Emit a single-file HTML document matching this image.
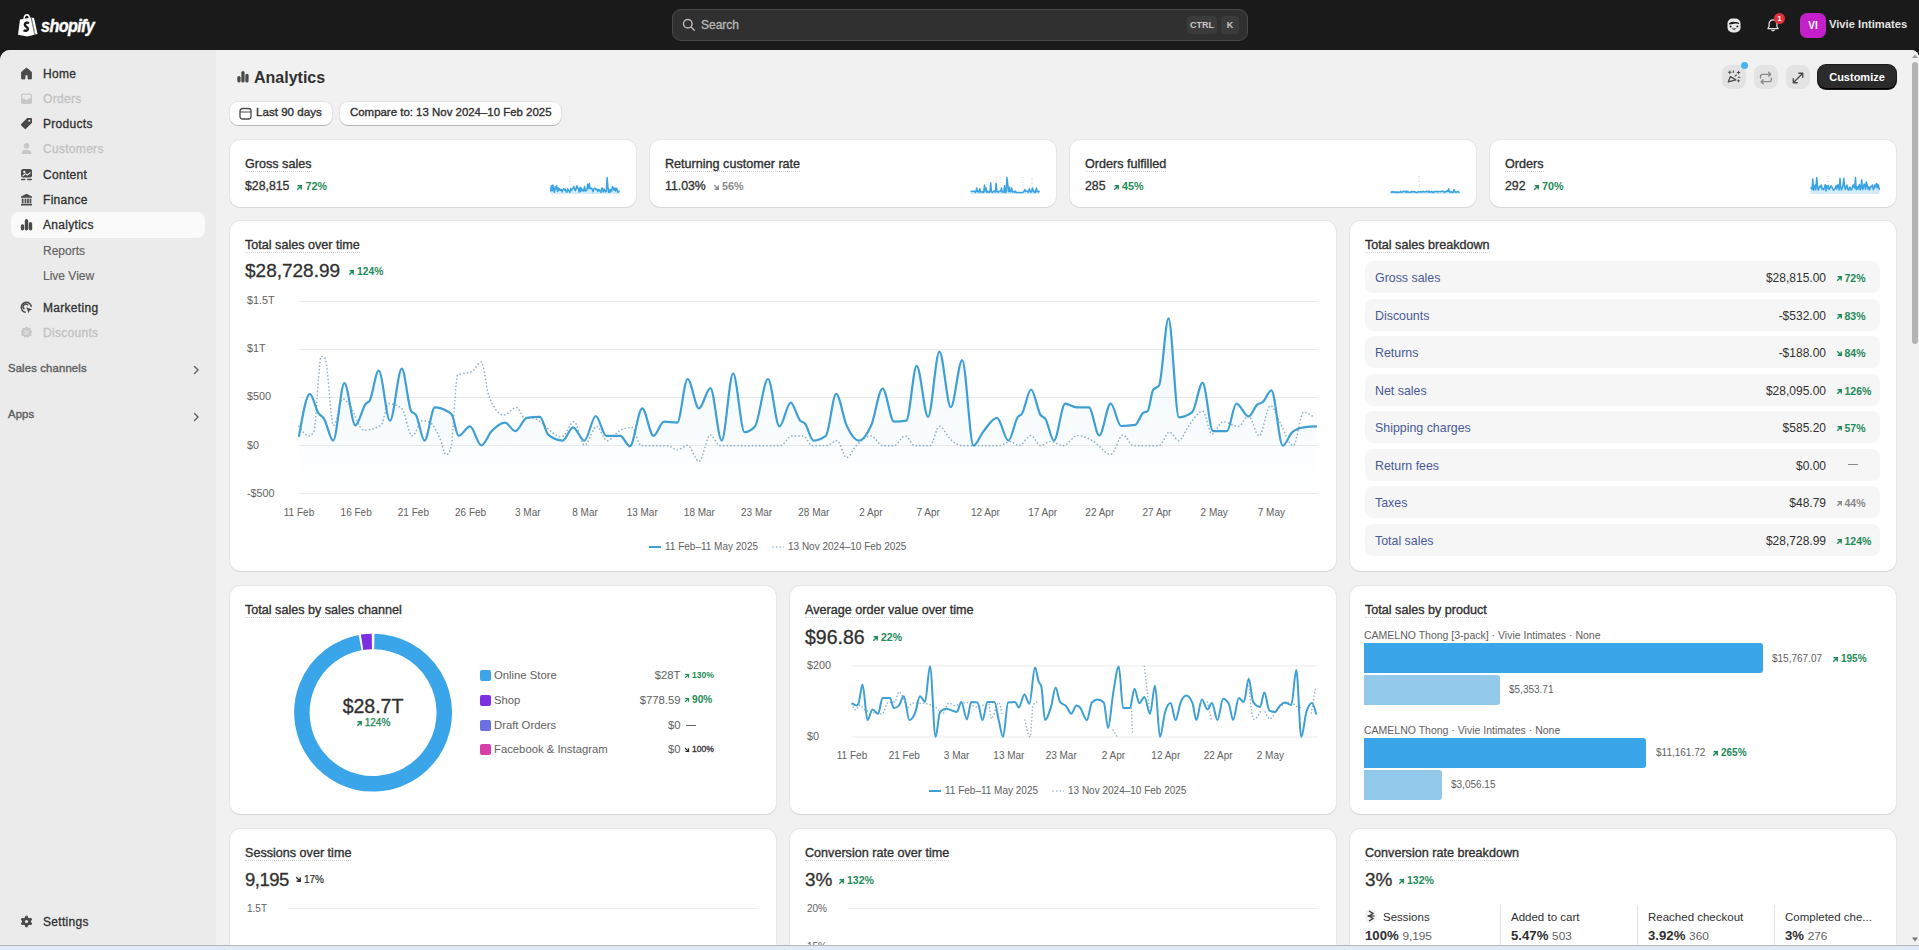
<!DOCTYPE html>
<html><head><meta charset="utf-8">
<style>
*{box-sizing:border-box;margin:0;padding:0}
html,body{width:1919px;height:950px;overflow:hidden;background:#1a1a1a;font-family:"Liberation Sans",sans-serif;color:#303030}
.abs{position:absolute}
.sb{-webkit-text-stroke:0.35px currentColor}
#top{position:absolute;left:0;top:0;width:1919px;height:50px;background:#1a1a1a}
#frame{position:absolute;left:0;top:50px;width:1919px;height:895px;background:#f1f1f1;border-radius:10px 8px 0 0;overflow:hidden}
#side{position:absolute;left:0;top:0;width:216px;height:895px;background:#ebebeb}
.nav{position:absolute;left:0;height:25px;width:216px;font-size:12px;line-height:25px}
.nav .ic{position:absolute;left:20px;top:6px;width:13px;height:13px}
.nav .tx{position:absolute;left:43px;top:1px;font-weight:400;color:#303030;font-size:12px;letter-spacing:0.3px;-webkit-text-stroke:0.3px currentColor}
.nav.dis .tx{color:#c2c2c2}
.nav.sub .tx{font-weight:400;color:#616161;font-size:12px;top:1.5px;letter-spacing:0;-webkit-text-stroke:0.15px currentColor}
.sec{position:absolute;left:8px;font-size:11.3px;font-weight:400;letter-spacing:0.15px;-webkit-text-stroke:0.4px #616161;color:#616161}
#taskbar{position:absolute;left:0;top:945px;width:1919px;height:5px;background:#dfeaf5;border-top:1px solid #b0b9c2}
.card{position:absolute;background:#fff;border-radius:10px;box-shadow:0 1px 0 rgba(26,26,26,.07),0 0 0 1px rgba(0,0,0,.045)}
.ttl{position:absolute;font-size:12.6px;font-weight:400;color:#303030;border-bottom:1px dotted #d4d4d4;line-height:14px;padding-bottom:0;white-space:nowrap}
.big{position:absolute;font-size:19px;color:#303030;white-space:nowrap;line-height:22px}
.up{color:#1f8a5a;font-weight:700;font-size:10.5px;white-space:nowrap}
.up svg,.dn svg,.gr svg{display:inline-block;vertical-align:middle}
.axis{position:absolute;font-size:10px;color:#616161;white-space:nowrap}
.brow{position:absolute;left:15px;width:515px;height:32px;background:#f6f6f6;border-radius:8px}
.brow .l{position:absolute;left:10px;top:1px;line-height:32px;font-size:12.4px;color:#4a5a98}
.brow .v{position:absolute;right:54px;top:1px;line-height:32px;font-size:12px;color:#303030;text-align:right}
.brow .p{position:absolute;left:470.5px;top:1px;line-height:32px;font-size:10.5px;font-weight:700;color:#1f8a5a}
.btnicon{position:absolute;width:24px;height:24px;border-radius:8px;background:#e3e3e3}
</style></head><body>

<!-- TOP BAR -->
<div id="top">
  <svg class="abs" style="left:17px;top:13px" width="22" height="24" viewBox="0 0 22 24">
    <path d="M3 6.5 L14.5 4.5 L18.5 21.5 L10.5 23.5 L1 21.8 Z" fill="#fff"/>
    <path d="M14.5 4.5 L17 5 L20.5 21 L18.5 21.5 Z" fill="#fff"/>
    <path d="M7 6 C7.3 3 8.6 1.8 10 1.8 C11.4 1.8 12.3 3 12.5 5.2" stroke="#fff" stroke-width="1.5" fill="none"/>
    <path d="M12 10.2 C10.5 9.2 8 9.6 7.8 11.6 C7.6 13.6 11.2 13.8 11 16 C10.8 18 8.3 18.2 6.6 17.2" stroke="#1a1a1a" stroke-width="2.4" fill="none"/>
    <line x1="14.2" y1="5" x2="17.8" y2="22" stroke="#1a1a1a" stroke-width="0.6"/>
  </svg>
  <div class="abs" style="left:40.5px;top:14.5px;font-size:18px;font-weight:700;font-style:italic;color:#fff;letter-spacing:-0.7px;transform:scaleX(0.9);transform-origin:left top;line-height:22px;-webkit-text-stroke:0.4px #fff">shopify</div>

  <div class="abs" style="left:672px;top:9px;width:576px;height:32px;background:#303030;border:1px solid #4a4a4a;border-radius:9px"></div>
  <svg class="abs" style="left:682px;top:18px" width="14" height="14" viewBox="0 0 14 14"><circle cx="5.8" cy="5.8" r="4.3" stroke="#b5b5b5" stroke-width="1.5" fill="none"/><line x1="9" y1="9" x2="12.3" y2="12.3" stroke="#b5b5b5" stroke-width="1.5" stroke-linecap="round"/></svg>
  <div class="abs sb" style="left:701px;top:18px;font-size:12px;line-height:15px;color:#b5b5b5">Search</div>
  <div class="abs" style="left:1187px;top:16px;width:30px;height:18px;background:#3b3b3b;border-radius:4px;font-size:9px;font-weight:700;color:#c8c8c8;text-align:center;line-height:18px">CTRL</div>
  <div class="abs" style="left:1221px;top:16px;width:18px;height:18px;background:#3b3b3b;border-radius:4px;font-size:9px;font-weight:700;color:#c8c8c8;text-align:center;line-height:18px">K</div>

  <!-- store icon -->
  <svg class="abs" style="left:1727px;top:17.5px" width="14" height="15" viewBox="0 0 14 15"><rect x="0.5" y="0.5" width="13" height="14" rx="5" fill="#e8e8e8"/><path d="M2 5.5 Q4 3.2 7.5 4 Q10.5 3.6 12 5 L12 6 Q9 5 7 5.8 Q4 6.5 2 6.5 Z" fill="#1a1a1a"/><circle cx="3.6" cy="8.4" r="1" fill="#1a1a1a"/><circle cx="10.4" cy="8.4" r="1" fill="#1a1a1a"/><path d="M4.5 10.5 Q7 12.8 9.5 10.5 Z" fill="#1a1a1a"/></svg>
  <!-- bell -->
  <svg class="abs" style="left:1766px;top:18px" width="14" height="15" viewBox="0 0 15 16"><path d="M7.5 2 C4.8 2 3.3 4 3.3 6.5 V9 L2 11.3 H13 L11.7 9 V6.5 C11.7 4 10.2 2 7.5 2 Z" stroke="#e3e3e3" stroke-width="1.3" fill="none" stroke-linejoin="round"/><path d="M5.8 12.5 Q7.5 15 9.2 12.5" stroke="#e3e3e3" stroke-width="1.3" fill="none"/></svg>
  <div class="abs" style="left:1774px;top:13px;width:11px;height:11px;border-radius:50%;background:#e0313c;color:#fff;font-size:8px;font-weight:700;text-align:center;line-height:11px">1</div>
  <div class="abs" style="left:1800px;top:13px;width:26px;height:25px;border-radius:7px;background:#c51fcc;color:#fff;font-size:10px;font-weight:700;text-align:center;line-height:25px">VI</div>
  <div class="abs" style="left:1829px;top:17px;font-size:11.2px;font-weight:700;color:#e3e3e3;line-height:15px;white-space:nowrap">Vivie Intimates</div>
</div>

<div id="frame">
  <!-- SIDEBAR -->
  <div id="side">
    <div class="nav " style="top:11px"><svg class="ic" viewBox="0 0 13 13"><path d="M6.5 1 L11.5 5 V11.5 Q11.5 12 11 12 H8 V9 Q8 7.8 6.5 7.8 Q5 7.8 5 9 V12 H2 Q1.5 12 1.5 11.5 V5 Z" fill="#4a4a4a" stroke="#4a4a4a" stroke-width="0.8" stroke-linejoin="round"/></svg><div class="tx">Home</div></div>
<div class="nav dis" style="top:36px"><svg class="ic" viewBox="0 0 13 13"><rect x="1" y="1.5" width="11" height="10.5" rx="2.5" fill="#c7c7c7"/><path d="M2.3 6.5 H4.5 L5.5 7.8 H7.5 L8.5 6.5 H10.7 V3.5 Q10.7 2.8 10 2.8 H3 Q2.3 2.8 2.3 3.5 Z" fill="#ebebeb"/></svg><div class="tx">Orders</div></div>
<div class="nav " style="top:61px"><svg class="ic" viewBox="0 0 13 13"><path d="M7.2 1 H11 Q12 1 12 2 V5.8 L6 11.8 Q5.3 12.5 4.6 11.8 L1.2 8.4 Q0.5 7.7 1.2 7 Z" fill="#4a4a4a"/><circle cx="9.3" cy="3.7" r="1" fill="#ebebeb"/></svg><div class="tx">Products</div></div>
<div class="nav dis" style="top:86px"><svg class="ic" viewBox="0 0 13 13"><circle cx="6.5" cy="3.8" r="2.8" fill="#c7c7c7"/><path d="M1.5 12 Q1.5 7.8 6.5 7.8 Q11.5 7.8 11.5 12 Z" fill="#c7c7c7"/></svg><div class="tx">Customers</div></div>
<div class="nav " style="top:112px"><svg class="ic" viewBox="0 0 13 13"><rect x="1" y="1" width="11" height="8.5" rx="2" fill="#4a4a4a"/><circle cx="4.3" cy="4" r="1.2" fill="#ebebeb"/><path d="M2.5 8 L5.5 5.8 L7.5 7 L10.5 4.5" stroke="#ebebeb" stroke-width="1.1" fill="none"/><rect x="1" y="10.8" width="4.5" height="1.5" rx="0.7" fill="#4a4a4a"/><rect x="7" y="10.8" width="5" height="1.5" rx="0.7" fill="#4a4a4a"/></svg><div class="tx">Content</div></div>
<div class="nav " style="top:137px"><svg class="ic" viewBox="0 0 13 13"><path d="M6.5 0.8 L12 3.6 V4.8 H1 V3.6 Z" fill="#4a4a4a"/><rect x="1.8" y="5.6" width="1.7" height="4.6" fill="#4a4a4a"/><rect x="4.6" y="5.6" width="1.7" height="4.6" fill="#4a4a4a"/><rect x="7.1" y="5.6" width="1.7" height="4.6" fill="#4a4a4a"/><rect x="9.6" y="5.6" width="1.7" height="4.6" fill="#4a4a4a"/><rect x="1" y="10.8" width="11" height="1.7" rx="0.5" fill="#4a4a4a"/></svg><div class="tx">Finance</div></div>
<div class="abs" style="left:11px;top:162px;width:194px;height:26px;background:#fafafa;border-radius:8px"></div>
<div class="nav sel" style="top:162px"><svg class="ic" viewBox="0 0 13 13"><rect x="0.8" y="6.3" width="3.4" height="6.2" rx="1.7" fill="#4a4a4a"/><rect x="4.8" y="1" width="3.4" height="11.5" rx="1.7" fill="#4a4a4a"/><rect x="8.8" y="4" width="3.4" height="8.5" rx="1.7" fill="#4a4a4a"/></svg><div class="tx">Analytics</div></div>
<div class="nav sub" style="top:187px"><div class="tx">Reports</div></div>
<div class="nav sub" style="top:212px"><div class="tx">Live View</div></div>
<div class="nav " style="top:245px"><svg class="ic" viewBox="0 0 13 13"><path d="M11.3 5.8 A5 5 0 1 0 5.8 11.3" stroke="#4a4a4a" stroke-width="1.6" fill="none"/><path d="M8 4.5 A2.6 2.6 0 1 0 4.5 8" stroke="#4a4a4a" stroke-width="1.5" fill="none"/><path d="M6.3 6.3 L12.3 8.6 L9.6 9.6 L8.6 12.3 Z" fill="#4a4a4a"/></svg><div class="tx">Marketing</div></div>
<div class="nav dis" style="top:270px"><svg class="ic" viewBox="0 0 13 13"><path d="M6.5 0.5 L8.2 1.9 L10.4 1.7 L10.7 3.9 L12.4 5.3 L11.3 7.2 L11.8 9.4 L9.6 9.9 L8.4 11.8 L6.5 10.8 L4.6 11.8 L3.4 9.9 L1.2 9.4 L1.7 7.2 L0.6 5.3 L2.3 3.9 L2.6 1.7 L4.8 1.9 Z" fill="#c7c7c7"/><path d="M4.6 8.4 L8.4 4.6" stroke="#ebebeb" stroke-width="1.1"/><circle cx="4.9" cy="4.9" r="0.8" fill="#ebebeb"/><circle cx="8.1" cy="8.1" r="0.8" fill="#ebebeb"/></svg><div class="tx">Discounts</div></div>
<div class="nav " style="top:859px"><svg class="ic" viewBox="0 0 13 13"><path d="M5.4 0.8 H7.6 L8 2.5 L9.4 3.3 L11.1 2.8 L12.2 4.7 L10.9 5.9 V7.1 L12.2 8.3 L11.1 10.2 L9.4 9.7 L8 10.5 L7.6 12.2 H5.4 L5 10.5 L3.6 9.7 L1.9 10.2 L0.8 8.3 L2.1 7.1 V5.9 L0.8 4.7 L1.9 2.8 L3.6 3.3 L5 2.5 Z" fill="#4a4a4a"/><circle cx="6.5" cy="6.5" r="1.6" fill="#ebebeb"/></svg><div class="tx">Settings</div></div>
<div class="sec" style="top:312px">Sales channels</div>
<svg class="abs" style="left:192px;top:315px" width="8" height="10" viewBox="0 0 8 10"><path d="M2.5 1.5 L6 5 L2.5 8.5" stroke="#616161" stroke-width="1.4" fill="none" stroke-linecap="round"/></svg>
<div class="sec" style="top:358px">Apps</div>
<svg class="abs" style="left:192px;top:362px" width="8" height="10" viewBox="0 0 8 10"><path d="M2.5 1.5 L6 5 L2.5 8.5" stroke="#616161" stroke-width="1.4" fill="none" stroke-linecap="round"/></svg>
  </div>

  <!-- MAIN HEADER -->
  <svg class="abs" style="left:237px;top:20px" width="12" height="13" viewBox="0 0 12 13"><rect x="0.3" y="6" width="3.3" height="6.5" rx="1.6" fill="#4a4a4a"/><rect x="4.3" y="1" width="3.3" height="11.5" rx="1.6" fill="#4a4a4a"/><rect x="8.3" y="3.8" width="3.3" height="8.7" rx="1.6" fill="#4a4a4a"/></svg>
  <div class="abs" style="left:254px;top:18px;font-size:16px;font-weight:700;color:#303030;line-height:20px;letter-spacing:0px">Analytics</div>

  <div class="abs" style="left:230px;top:52px;width:102px;height:23px;background:#fff;border-radius:8px;box-shadow:0 1px 0 rgba(0,0,0,.18),0 0 0 1px rgba(0,0,0,.06)"></div>
  <svg class="abs" style="left:239px;top:57px" width="13" height="13" viewBox="0 0 13 13"><rect x="1" y="1.5" width="11" height="10.5" rx="2.5" stroke="#4a4a4a" stroke-width="1.3" fill="none"/><line x1="1" y1="5" x2="12" y2="5" stroke="#4a4a4a" stroke-width="1.2"/></svg>
  <div class="abs sb" style="left:256px;top:54px;font-size:11.6px;line-height:15px;color:#303030">Last 90 days</div>
  <div class="abs" style="left:340px;top:52px;width:221px;height:23px;background:#fff;border-radius:8px;box-shadow:0 1px 0 rgba(0,0,0,.18),0 0 0 1px rgba(0,0,0,.06)"></div>
  <div class="abs sb" style="left:350px;top:54.5px;font-size:11.45px;line-height:15px;color:#303030;white-space:nowrap">Compare to: 13 Nov 2024&#8211;10 Feb 2025</div>

  <!-- right header buttons -->
  <div class="btnicon" style="left:1722px;top:15px"></div>
  <svg class="abs" style="left:1726px;top:20px" width="16" height="16" viewBox="1726 70 16 16"><path d="M1728.3 81.8 L1730.4 76.6 L1735.9 79.8 Z" stroke="#4a4a4a" stroke-width="1.3" fill="none" stroke-linejoin="round"/><path d="M1729.8 71 V73.4 M1728.6 72.2 H1731 M1733.3 70.8 V72.4 M1738.5 71.3 V73.7 M1737.3 72.5 H1739.7 M1735.2 76 L1736.4 74.8 M1738.2 77.2 H1739.9 M1738.5 79.8 V81.6 M1737.6 80.7 H1739.4" stroke="#4a4a4a" stroke-width="1.1" fill="none" stroke-linecap="round"/></svg>
  <div class="abs" style="left:1741px;top:12px;width:7px;height:7px;border-radius:50%;background:#4ab3f0"></div>
  <div class="btnicon" style="left:1754px;top:15px"></div>
  <svg class="abs" style="left:1758px;top:20px" width="16" height="16" viewBox="0 0 16 16"><path d="M2.5 8 V6.5 Q2.5 4.3 4.7 4.3 H12.5 M10.6 2.3 L12.7 4.3 L10.6 6.3 M13.3 8 V9.5 Q13.3 11.7 11.1 11.7 H3.3 M5.2 9.7 L3.1 11.7 L5.2 13.7" stroke="#8a8a8a" stroke-width="1.3" fill="none" stroke-linecap="round" stroke-linejoin="round"/></svg>
  <div class="btnicon" style="left:1786px;top:15px"></div>
  <svg class="abs" style="left:1790px;top:20px" width="16" height="16" viewBox="0 0 16 16"><path d="M3.5 12.5 L12.5 3.5 M8.8 3.3 H12.7 V7.2 M3.3 8.8 V12.7 H7.2" stroke="#4a4a4a" stroke-width="1.4" fill="none" stroke-linecap="round" stroke-linejoin="round"/></svg>
  <div class="abs" style="left:1818px;top:15px;width:78px;height:24px;background:#2b2b2b;border-radius:8px;box-shadow:inset 0 -1px 0 #000,0 0 0 1px #1a1a1a"></div>
  <div class="abs" style="left:1818px;top:15px;width:78px;height:25px;line-height:24px;text-align:center;font-size:11px;font-weight:700;color:#fff">Customize</div>

  <!-- scrollbar -->
  <div class="abs" style="left:1909px;top:0;width:10px;height:895px;background:#f1f1f1"></div>
  <div class="abs" style="left:1912px;top:12px;width:6px;height:282px;border-radius:3px;background:#b3b3b3"></div>
  <svg class="abs" style="left:1912px;top:4px" width="6" height="4" viewBox="0 0 6 4"><path d="M0 4 L3 0.5 L6 4 Z" fill="#a0a0a0"/></svg>
  <svg class="abs" style="left:1912px;top:887px" width="6" height="5" viewBox="0 0 6 5"><path d="M0 0.5 L6 0.5 L3 4.5 Z" fill="#777"/></svg>

  <div class="card" style="left:230px;top:90px;width:406px;height:67px"><div class="ttl sb" style="left:15px;top:16.5px">Gross sales</div><div class="abs" style="left:15px;top:39px;font-size:12.3px;line-height:15px;white-space:nowrap;color:#303030;-webkit-text-stroke:0.3px #303030">$28,815</div><div class="abs up" style="left:66.4px;top:40px;line-height:12px;font-size:10.8px"><svg width="7" height="7" viewBox="0 0 8 8" style="margin-right:2px"><path d="M2 6 L6 2 M2.6 2 H6 V5.4" stroke="#1f8a5a" stroke-width="1.6" fill="none" stroke-linecap="square"/></svg>72%</div><svg width="70" height="18" viewBox="0 0 70 18" style="position:absolute;right:16px;bottom:13px"><path d="M0.5 15.4 L1.3 9.8 L2.1 14.8 L2.8 9.0 L3.6 13.7 L4.4 16.2 L5.2 10.5 L5.9 12.7 L6.7 9.8 L7.5 15.4 L8.3 12.0 L9.0 14.4 L9.8 12.8 L10.6 14.4 L11.4 13.6 L12.1 15.8 L12.9 13.6 L13.7 12.6 L14.5 14.1 L15.2 13.2 L16.0 15.3 L16.8 16.2 L17.6 13.1 L18.3 13.8 L19.1 15.1 L19.9 16.4 L20.7 12.6 L21.4 14.4 L22.2 13.3 L23.0 12.5 L23.8 10.5 L24.5 12.4 L25.3 14.7 L26.1 12.9 L26.9 9.8 L27.6 12.3 L28.4 12.5 L29.2 16.1 L30.0 11.2 L30.7 15.5 L31.5 12.2 L32.3 14.5 L33.1 13.7 L33.8 15.1 L34.6 10.5 L35.4 14.8 L36.2 14.9 L36.9 13.9 L37.7 8.2 L38.5 12.4 L39.3 7.5 L40.0 12.3 L40.8 12.8 L41.6 12.0 L42.4 13.5 L43.1 15.8 L43.9 12.6 L44.7 12.2 L45.5 12.4 L46.2 13.9 L47.0 13.3 L47.8 15.5 L48.6 13.5 L49.3 13.9 L50.1 15.2 L50.9 16.2 L51.7 12.7 L52.4 12.0 L53.2 16.1 L54.0 12.9 L54.8 14.7 L55.5 15.8 L56.3 15.2 L57.1 1.5 L57.9 10.5 L58.6 16.3 L59.4 13.7 L60.2 16.3 L61.0 13.3 L61.7 15.0 L62.5 10.5 L63.3 12.1 L64.1 14.2 L64.8 12.0 L65.6 15.1 L66.4 12.0 L67.2 13.8 L67.9 16.4 L68.7 15.6 L69.5 14.7 L69.5 18 L0.5 18 Z" fill="#3aa3e3" fill-opacity="0.22"/><line x1="20.0" y1="0.0" x2="20.0" y2="10.0" stroke="#aab6c0" stroke-width="0.8" stroke-dasharray="0.8 1.8"/><path d="M0.5 15.4 L1.3 9.8 L2.1 14.8 L2.8 9.0 L3.6 13.7 L4.4 16.2 L5.2 10.5 L5.9 12.7 L6.7 9.8 L7.5 15.4 L8.3 12.0 L9.0 14.4 L9.8 12.8 L10.6 14.4 L11.4 13.6 L12.1 15.8 L12.9 13.6 L13.7 12.6 L14.5 14.1 L15.2 13.2 L16.0 15.3 L16.8 16.2 L17.6 13.1 L18.3 13.8 L19.1 15.1 L19.9 16.4 L20.7 12.6 L21.4 14.4 L22.2 13.3 L23.0 12.5 L23.8 10.5 L24.5 12.4 L25.3 14.7 L26.1 12.9 L26.9 9.8 L27.6 12.3 L28.4 12.5 L29.2 16.1 L30.0 11.2 L30.7 15.5 L31.5 12.2 L32.3 14.5 L33.1 13.7 L33.8 15.1 L34.6 10.5 L35.4 14.8 L36.2 14.9 L36.9 13.9 L37.7 8.2 L38.5 12.4 L39.3 7.5 L40.0 12.3 L40.8 12.8 L41.6 12.0 L42.4 13.5 L43.1 15.8 L43.9 12.6 L44.7 12.2 L45.5 12.4 L46.2 13.9 L47.0 13.3 L47.8 15.5 L48.6 13.5 L49.3 13.9 L50.1 15.2 L50.9 16.2 L51.7 12.7 L52.4 12.0 L53.2 16.1 L54.0 12.9 L54.8 14.7 L55.5 15.8 L56.3 15.2 L57.1 1.5 L57.9 10.5 L58.6 16.3 L59.4 13.7 L60.2 16.3 L61.0 13.3 L61.7 15.0 L62.5 10.5 L63.3 12.1 L64.1 14.2 L64.8 12.0 L65.6 15.1 L66.4 12.0 L67.2 13.8 L67.9 16.4 L68.7 15.6 L69.5 14.7" stroke="#3aa3e3" stroke-width="1.5" fill="none" stroke-linejoin="round"/></svg></div>
<div class="card" style="left:650px;top:90px;width:406px;height:67px"><div class="ttl sb" style="left:15px;top:16.5px">Returning customer rate</div><div class="abs" style="left:15px;top:39px;font-size:12.3px;line-height:15px;white-space:nowrap;color:#303030;-webkit-text-stroke:0.3px #303030">11.03%</div><div class="abs up" style="left:63.0px;top:40px;line-height:12px;font-size:10.8px;color:#8a8a8a"><svg width="7" height="7" viewBox="0 0 8 8" style="margin-right:2px"><path d="M2 2 L6 6 M2.6 6 H6 V2.6" stroke="#8a8a8a" stroke-width="1.6" fill="none" stroke-linecap="square"/></svg>56%</div><svg width="70" height="18" viewBox="0 0 70 18" style="position:absolute;right:16px;bottom:13px"><path d="M0.5 15.6 L1.3 15.4 L2.1 15.3 L2.8 15.1 L3.6 15.4 L4.4 15.1 L5.2 16.5 L5.9 15.8 L6.7 12.0 L7.5 15.5 L8.3 15.1 L9.0 16.3 L9.8 12.8 L10.6 16.1 L11.4 15.7 L12.1 15.6 L12.9 16.5 L13.7 16.2 L14.5 9.0 L15.2 15.1 L16.0 12.0 L16.8 16.3 L17.6 15.3 L18.3 16.3 L19.1 15.6 L19.9 16.3 L20.7 6.8 L21.4 15.2 L22.2 16.2 L23.0 16.2 L23.8 15.0 L24.5 15.2 L25.3 16.1 L26.1 7.5 L26.9 15.7 L27.6 15.5 L28.4 16.2 L29.2 15.1 L30.0 15.5 L30.7 15.1 L31.5 12.0 L32.3 16.1 L33.1 16.0 L33.8 16.3 L34.6 9.8 L35.4 16.4 L36.2 16.0 L36.9 1.5 L37.7 7.5 L38.5 15.5 L39.3 11.2 L40.0 16.0 L40.8 15.3 L41.6 12.0 L42.4 16.0 L43.1 15.8 L43.9 15.4 L44.7 16.4 L45.5 15.0 L46.2 16.5 L47.0 16.5 L47.8 16.5 L48.6 16.5 L49.3 16.5 L50.1 16.5 L50.9 16.5 L51.7 16.5 L52.4 16.4 L53.2 16.2 L54.0 15.1 L54.8 13.5 L55.5 15.4 L56.3 15.1 L57.1 15.1 L57.9 16.0 L58.6 16.0 L59.4 12.8 L60.2 15.3 L61.0 16.3 L61.7 15.4 L62.5 12.0 L63.3 15.2 L64.1 16.4 L64.8 15.1 L65.6 16.4 L66.4 12.0 L67.2 15.6 L67.9 15.1 L68.7 16.0 L69.5 15.1 L69.5 18 L0.5 18 Z" fill="#3aa3e3" fill-opacity="0.22"/><line x1="17.0" y1="3.0" x2="17.0" y2="12.0" stroke="#aab6c0" stroke-width="0.8" stroke-dasharray="0.8 1.8"/><line x1="26.0" y1="1.0" x2="26.0" y2="12.0" stroke="#aab6c0" stroke-width="0.8" stroke-dasharray="0.8 1.8"/><line x1="30.0" y1="1.0" x2="30.0" y2="12.0" stroke="#aab6c0" stroke-width="0.8" stroke-dasharray="0.8 1.8"/><line x1="53.0" y1="1.0" x2="53.0" y2="14.0" stroke="#aab6c0" stroke-width="0.8" stroke-dasharray="0.8 1.8"/><line x1="62.0" y1="2.0" x2="62.0" y2="14.0" stroke="#aab6c0" stroke-width="0.8" stroke-dasharray="0.8 1.8"/><path d="M0.5 15.6 L1.3 15.4 L2.1 15.3 L2.8 15.1 L3.6 15.4 L4.4 15.1 L5.2 16.5 L5.9 15.8 L6.7 12.0 L7.5 15.5 L8.3 15.1 L9.0 16.3 L9.8 12.8 L10.6 16.1 L11.4 15.7 L12.1 15.6 L12.9 16.5 L13.7 16.2 L14.5 9.0 L15.2 15.1 L16.0 12.0 L16.8 16.3 L17.6 15.3 L18.3 16.3 L19.1 15.6 L19.9 16.3 L20.7 6.8 L21.4 15.2 L22.2 16.2 L23.0 16.2 L23.8 15.0 L24.5 15.2 L25.3 16.1 L26.1 7.5 L26.9 15.7 L27.6 15.5 L28.4 16.2 L29.2 15.1 L30.0 15.5 L30.7 15.1 L31.5 12.0 L32.3 16.1 L33.1 16.0 L33.8 16.3 L34.6 9.8 L35.4 16.4 L36.2 16.0 L36.9 1.5 L37.7 7.5 L38.5 15.5 L39.3 11.2 L40.0 16.0 L40.8 15.3 L41.6 12.0 L42.4 16.0 L43.1 15.8 L43.9 15.4 L44.7 16.4 L45.5 15.0 L46.2 16.5 L47.0 16.5 L47.8 16.5 L48.6 16.5 L49.3 16.5 L50.1 16.5 L50.9 16.5 L51.7 16.5 L52.4 16.4 L53.2 16.2 L54.0 15.1 L54.8 13.5 L55.5 15.4 L56.3 15.1 L57.1 15.1 L57.9 16.0 L58.6 16.0 L59.4 12.8 L60.2 15.3 L61.0 16.3 L61.7 15.4 L62.5 12.0 L63.3 15.2 L64.1 16.4 L64.8 15.1 L65.6 16.4 L66.4 12.0 L67.2 15.6 L67.9 15.1 L68.7 16.0 L69.5 15.1" stroke="#3aa3e3" stroke-width="1.5" fill="none" stroke-linejoin="round"/></svg></div>
<div class="card" style="left:1070px;top:90px;width:406px;height:67px"><div class="ttl sb" style="left:15px;top:16.5px">Orders fulfilled</div><div class="abs" style="left:15px;top:39px;font-size:12.3px;line-height:15px;white-space:nowrap;color:#303030;-webkit-text-stroke:0.3px #303030">285</div><div class="abs up" style="left:43.0px;top:40px;line-height:12px;font-size:10.8px"><svg width="7" height="7" viewBox="0 0 8 8" style="margin-right:2px"><path d="M2 6 L6 2 M2.6 2 H6 V5.4" stroke="#1f8a5a" stroke-width="1.6" fill="none" stroke-linecap="square"/></svg>45%</div><svg width="70" height="18" viewBox="0 0 70 18" style="position:absolute;right:16px;bottom:13px"><path d="M0.5 16.0 L1.3 16.3 L2.1 15.5 L2.8 16.4 L3.6 15.7 L4.4 16.0 L5.2 16.4 L5.9 15.7 L6.7 16.4 L7.5 15.8 L8.3 16.4 L9.0 16.4 L9.8 15.9 L10.6 15.3 L11.4 16.3 L12.1 16.2 L12.9 15.6 L13.7 15.1 L14.5 15.6 L15.2 15.9 L16.0 15.0 L16.8 16.4 L17.6 15.2 L18.3 16.1 L19.1 16.3 L19.9 16.3 L20.7 16.0 L21.4 15.3 L22.2 16.2 L23.0 15.6 L23.8 15.5 L24.5 15.9 L25.3 15.7 L26.1 16.4 L26.9 16.4 L27.6 16.2 L28.4 15.5 L29.2 15.9 L30.0 16.0 L30.7 15.6 L31.5 15.8 L32.3 16.1 L33.1 15.3 L33.8 15.5 L34.6 16.1 L35.4 15.6 L36.2 15.7 L36.9 15.2 L37.7 15.4 L38.5 16.1 L39.3 15.0 L40.0 16.3 L40.8 15.9 L41.6 15.4 L42.4 16.3 L43.1 15.8 L43.9 16.4 L44.7 15.5 L45.5 15.4 L46.2 15.6 L47.0 15.2 L47.8 16.0 L48.6 15.5 L49.3 15.6 L50.1 15.6 L50.9 15.8 L51.7 15.2 L52.4 15.1 L53.2 15.8 L54.0 15.5 L54.8 16.4 L55.5 15.4 L56.3 15.5 L57.1 15.0 L57.9 15.3 L58.6 12.8 L59.4 15.9 L60.2 15.5 L61.0 16.5 L61.7 15.8 L62.5 16.2 L63.3 16.3 L64.1 13.5 L64.8 15.3 L65.6 16.3 L66.4 16.1 L67.2 15.9 L67.9 15.2 L68.7 16.4 L69.5 15.8 L69.5 18 L0.5 18 Z" fill="#3aa3e3" fill-opacity="0.22"/><line x1="29.0" y1="0.0" x2="29.0" y2="12.0" stroke="#aab6c0" stroke-width="0.8" stroke-dasharray="0.8 1.8"/><path d="M0.5 16.0 L1.3 16.3 L2.1 15.5 L2.8 16.4 L3.6 15.7 L4.4 16.0 L5.2 16.4 L5.9 15.7 L6.7 16.4 L7.5 15.8 L8.3 16.4 L9.0 16.4 L9.8 15.9 L10.6 15.3 L11.4 16.3 L12.1 16.2 L12.9 15.6 L13.7 15.1 L14.5 15.6 L15.2 15.9 L16.0 15.0 L16.8 16.4 L17.6 15.2 L18.3 16.1 L19.1 16.3 L19.9 16.3 L20.7 16.0 L21.4 15.3 L22.2 16.2 L23.0 15.6 L23.8 15.5 L24.5 15.9 L25.3 15.7 L26.1 16.4 L26.9 16.4 L27.6 16.2 L28.4 15.5 L29.2 15.9 L30.0 16.0 L30.7 15.6 L31.5 15.8 L32.3 16.1 L33.1 15.3 L33.8 15.5 L34.6 16.1 L35.4 15.6 L36.2 15.7 L36.9 15.2 L37.7 15.4 L38.5 16.1 L39.3 15.0 L40.0 16.3 L40.8 15.9 L41.6 15.4 L42.4 16.3 L43.1 15.8 L43.9 16.4 L44.7 15.5 L45.5 15.4 L46.2 15.6 L47.0 15.2 L47.8 16.0 L48.6 15.5 L49.3 15.6 L50.1 15.6 L50.9 15.8 L51.7 15.2 L52.4 15.1 L53.2 15.8 L54.0 15.5 L54.8 16.4 L55.5 15.4 L56.3 15.5 L57.1 15.0 L57.9 15.3 L58.6 12.8 L59.4 15.9 L60.2 15.5 L61.0 16.5 L61.7 15.8 L62.5 16.2 L63.3 16.3 L64.1 13.5 L64.8 15.3 L65.6 16.3 L66.4 16.1 L67.2 15.9 L67.9 15.2 L68.7 16.4 L69.5 15.8" stroke="#3aa3e3" stroke-width="1.5" fill="none" stroke-linejoin="round"/></svg></div>
<div class="card" style="left:1490px;top:90px;width:406px;height:67px"><div class="ttl sb" style="left:15px;top:16.5px">Orders</div><div class="abs" style="left:15px;top:39px;font-size:12.3px;line-height:15px;white-space:nowrap;color:#303030;-webkit-text-stroke:0.3px #303030">292</div><div class="abs up" style="left:43.0px;top:40px;line-height:12px;font-size:10.8px"><svg width="7" height="7" viewBox="0 0 8 8" style="margin-right:2px"><path d="M2 6 L6 2 M2.6 2 H6 V5.4" stroke="#1f8a5a" stroke-width="1.6" fill="none" stroke-linecap="square"/></svg>70%</div><svg width="70" height="18" viewBox="0 0 70 18" style="position:absolute;right:16px;bottom:13px"><path d="M0.5 11.5 L1.3 12.0 L2.1 13.4 L2.8 3.0 L3.6 14.2 L4.4 11.2 L5.2 8.9 L5.9 13.8 L6.7 1.5 L7.5 10.6 L8.3 14.0 L9.0 12.0 L9.8 10.0 L10.6 11.5 L11.4 9.0 L12.1 13.3 L12.9 12.8 L13.7 13.6 L14.5 11.2 L15.2 8.7 L16.0 15.0 L16.8 9.6 L17.6 11.9 L18.3 9.8 L19.1 13.5 L19.9 12.5 L20.7 10.2 L21.4 9.9 L22.2 11.7 L23.0 13.7 L23.8 14.2 L24.5 13.0 L25.3 12.6 L26.1 9.4 L26.9 13.1 L27.6 8.9 L28.4 9.0 L29.2 13.9 L30.0 2.2 L30.7 11.3 L31.5 14.1 L32.3 11.7 L33.1 8.8 L33.8 2.2 L34.6 10.7 L35.4 13.5 L36.2 10.8 L36.9 8.9 L37.7 13.0 L38.5 14.2 L39.3 12.0 L40.0 11.0 L40.8 14.1 L41.6 13.7 L42.4 11.3 L43.1 8.7 L43.9 11.2 L44.7 11.9 L45.5 1.5 L46.2 13.7 L47.0 10.8 L47.8 13.2 L48.6 10.6 L49.3 8.5 L50.1 13.9 L50.9 10.9 L51.7 3.8 L52.4 13.4 L53.2 12.6 L54.0 8.3 L54.8 8.3 L55.5 13.5 L56.3 6.0 L57.1 8.5 L57.9 12.8 L58.6 10.6 L59.4 14.0 L60.2 12.1 L61.0 10.2 L61.7 10.7 L62.5 9.0 L63.3 13.7 L64.1 12.2 L64.8 9.1 L65.6 10.7 L66.4 7.5 L67.2 11.8 L67.9 8.3 L68.7 10.8 L69.5 14.1 L69.5 18 L0.5 18 Z" fill="#3aa3e3" fill-opacity="0.22"/><line x1="18.0" y1="0.0" x2="18.0" y2="8.0" stroke="#aab6c0" stroke-width="0.8" stroke-dasharray="0.8 1.8"/><path d="M0.5 11.5 L1.3 12.0 L2.1 13.4 L2.8 3.0 L3.6 14.2 L4.4 11.2 L5.2 8.9 L5.9 13.8 L6.7 1.5 L7.5 10.6 L8.3 14.0 L9.0 12.0 L9.8 10.0 L10.6 11.5 L11.4 9.0 L12.1 13.3 L12.9 12.8 L13.7 13.6 L14.5 11.2 L15.2 8.7 L16.0 15.0 L16.8 9.6 L17.6 11.9 L18.3 9.8 L19.1 13.5 L19.9 12.5 L20.7 10.2 L21.4 9.9 L22.2 11.7 L23.0 13.7 L23.8 14.2 L24.5 13.0 L25.3 12.6 L26.1 9.4 L26.9 13.1 L27.6 8.9 L28.4 9.0 L29.2 13.9 L30.0 2.2 L30.7 11.3 L31.5 14.1 L32.3 11.7 L33.1 8.8 L33.8 2.2 L34.6 10.7 L35.4 13.5 L36.2 10.8 L36.9 8.9 L37.7 13.0 L38.5 14.2 L39.3 12.0 L40.0 11.0 L40.8 14.1 L41.6 13.7 L42.4 11.3 L43.1 8.7 L43.9 11.2 L44.7 11.9 L45.5 1.5 L46.2 13.7 L47.0 10.8 L47.8 13.2 L48.6 10.6 L49.3 8.5 L50.1 13.9 L50.9 10.9 L51.7 3.8 L52.4 13.4 L53.2 12.6 L54.0 8.3 L54.8 8.3 L55.5 13.5 L56.3 6.0 L57.1 8.5 L57.9 12.8 L58.6 10.6 L59.4 14.0 L60.2 12.1 L61.0 10.2 L61.7 10.7 L62.5 9.0 L63.3 13.7 L64.1 12.2 L64.8 9.1 L65.6 10.7 L66.4 7.5 L67.2 11.8 L67.9 8.3 L68.7 10.8 L69.5 14.1" stroke="#3aa3e3" stroke-width="1.5" fill="none" stroke-linejoin="round"/></svg></div>
<div class="card" style="left:230px;top:171px;width:1106px;height:350px"><div class="ttl sb" style="left:15px;top:16.5px">Total sales over time</div><div class="abs" style="left:15px;top:39px;font-size:19px;line-height:22px;white-space:nowrap;color:#303030;-webkit-text-stroke:0.3px #303030">$28,728.99</div><div class="abs up" style="left:118px;top:45px;line-height:12px;font-size:10.3px"><svg width="7" height="7" viewBox="0 0 8 8" style="margin-right:2px"><path d="M2 6 L6 2 M2.6 2 H6 V5.4" stroke="#1f8a5a" stroke-width="1.6" fill="none" stroke-linecap="square"/></svg>124%</div></div>
<svg class="abs" style="left:230px;top:171px;overflow:visible" width="1106" height="350" viewBox="230 221 1106 350"><defs><linearGradient id="g1" x1="0" y1="0" x2="0" y2="1"><stop offset="0" stop-color="#3aa3e3" stop-opacity="0.09"/><stop offset="1" stop-color="#3aa3e3" stop-opacity="0.0"/></linearGradient></defs><line x1="299" y1="301.5" x2="1318" y2="301.5" stroke="#ebebeb" stroke-width="1"/><line x1="299" y1="349.5" x2="1318" y2="349.5" stroke="#ebebeb" stroke-width="1"/><line x1="299" y1="397.5" x2="1318" y2="397.5" stroke="#ebebeb" stroke-width="1"/><line x1="299" y1="445.5" x2="1318" y2="445.5" stroke="#ebebeb" stroke-width="1"/><line x1="299" y1="493.5" x2="1318" y2="493.5" stroke="#ebebeb" stroke-width="1"/><path d="M298.9 436.8C302.6 415.3 306.2 393.8 309.9 393.8C312.7 393.8 315.6 408.8 318.4 413.1C320.3 416.0 322.2 415.9 324.1 418.8C327.1 423.5 330.2 440.6 333.2 440.6C336.9 440.6 340.7 383.2 344.4 383.2C348.1 383.2 351.7 425.4 355.4 425.4C358.9 425.4 362.3 407.6 365.8 403.7C367.1 402.3 368.3 402.7 369.6 400.8C372.6 396.2 375.7 370.5 378.7 370.5C382.5 370.5 386.2 420.7 390.0 420.7C393.9 420.7 397.9 368.6 401.8 368.6C404.9 368.6 408.1 406.2 411.2 411.2C412.8 413.7 414.4 412.5 416.0 415.0C418.8 419.5 421.7 440.6 424.5 440.6C428.0 440.6 431.4 407.4 434.9 407.4C439.0 407.4 443.1 408.7 447.2 411.2C448.8 412.2 450.4 412.5 452.0 415.0C454.2 418.5 456.4 435.9 458.6 435.9C462.4 435.9 466.2 426.4 470.0 426.4C473.8 426.4 477.5 445.3 481.3 445.3C484.8 445.3 488.2 434.7 491.7 431.1C496.1 426.5 500.6 422.6 505.0 422.6C508.5 422.6 511.9 431.1 515.4 431.1C519.2 431.1 523.0 418.5 526.8 417.9C531.2 417.2 535.5 416.9 539.9 416.9C542.7 416.9 545.6 432.6 548.4 434.9C553.1 438.7 557.9 440.6 562.6 440.6C566.1 440.6 569.5 427.3 573.0 427.3C576.8 427.3 580.6 440.6 584.4 440.6C588.2 440.6 592.0 416.0 595.8 416.0C599.3 416.0 602.7 435.9 606.2 435.9C610.9 435.9 615.7 435.9 620.4 435.9C623.6 435.9 626.7 446.3 629.9 446.3C634.0 446.3 638.1 408.4 642.2 408.4C646.0 408.4 649.7 435.9 653.5 435.9C657.0 435.9 660.5 421.7 664.0 421.7C668.4 421.7 672.8 422.6 677.2 422.6C680.7 422.6 684.1 379.0 687.6 379.0C691.4 379.0 695.2 408.4 699.0 408.4C702.8 408.4 706.6 388.1 710.4 388.1C714.2 388.1 717.9 440.6 721.7 440.6C725.5 440.6 729.3 373.3 733.1 373.3C736.9 373.3 740.7 432.1 744.5 432.1C748.0 432.1 751.4 430.2 754.9 426.4C759.3 421.6 763.6 379.0 768.0 379.0C771.8 379.0 775.6 426.4 779.4 426.4C783.2 426.4 786.9 402.7 790.7 402.7C793.9 402.7 797.0 417.5 800.2 420.7C801.8 422.3 803.3 421.8 804.9 423.5C807.8 426.6 810.6 440.6 813.5 440.6C817.6 440.6 821.7 439.0 825.8 435.9C829.3 433.3 832.7 393.8 836.2 393.8C839.7 393.8 843.1 417.7 846.6 425.4C850.7 434.5 854.8 440.6 858.9 440.6C863.0 440.6 867.1 434.7 871.2 425.4C875.0 416.8 878.8 388.5 882.6 388.5C886.4 388.5 890.2 421.7 894.0 421.7C898.1 421.7 902.2 421.4 906.3 420.7C909.8 420.1 913.2 365.8 916.7 365.8C920.5 365.8 924.3 416.9 928.1 416.9C931.9 416.9 935.6 351.6 939.4 351.6C943.2 351.6 947.0 407.1 950.8 407.1C954.6 407.1 958.4 360.1 962.2 360.1C966.0 360.1 969.7 445.7 973.5 445.7C976.7 445.7 979.8 436.1 983.0 432.1C987.7 426.2 992.3 417.9 997.0 417.9C1000.8 417.9 1004.6 440.6 1008.4 440.6C1011.6 440.6 1014.7 420.8 1017.9 416.9C1019.2 415.3 1020.4 415.7 1021.7 414.1C1024.8 410.1 1028.0 389.5 1031.1 389.5C1034.3 389.5 1037.4 410.5 1040.6 415.0C1042.2 417.3 1043.8 416.5 1045.4 418.8C1048.2 422.9 1051.1 440.6 1053.9 440.6C1057.7 440.6 1061.4 403.7 1065.2 403.7C1069.0 403.7 1072.8 407.4 1076.6 407.4C1080.7 407.4 1084.8 407.4 1088.9 407.4C1092.4 407.4 1095.8 435.5 1099.3 435.5C1103.1 435.5 1106.9 403.7 1110.7 403.7C1114.2 403.7 1117.6 426.0 1121.1 426.0C1125.8 426.0 1130.6 425.6 1135.3 424.9C1137.8 424.5 1140.4 415.1 1142.9 413.1C1144.5 411.8 1146.0 412.5 1147.6 411.2C1149.5 409.7 1151.4 392.0 1153.3 389.5C1155.2 387.0 1157.1 388.2 1159.0 385.7C1162.2 381.5 1165.3 318.4 1168.5 318.4C1172.0 318.4 1175.4 417.3 1178.9 417.3C1183.3 417.3 1187.8 415.6 1192.2 412.2C1195.7 409.5 1199.1 382.8 1202.6 382.8C1206.1 382.8 1209.5 431.1 1213.0 431.1C1217.6 431.1 1222.3 431.1 1226.9 431.1C1230.1 431.1 1233.2 403.7 1236.4 403.7C1240.5 403.7 1244.6 416.5 1248.7 416.5C1251.5 416.5 1254.4 407.0 1257.2 404.6C1259.1 403.0 1261.0 403.4 1262.9 401.8C1265.7 399.4 1268.6 390.4 1271.4 390.4C1275.2 390.4 1279.0 445.7 1282.8 445.7C1286.0 445.7 1289.1 434.8 1292.3 432.1C1296.1 428.9 1299.8 427.8 1303.6 427.3C1308.0 426.7 1312.5 426.5 1316.9 426.4 L1316.9 493 L298.9 493 Z" fill="url(#g1)"/><path d="M298.9 426.4C302.3 431.1 305.6 435.9 309.0 435.9C310.6 435.9 312.1 434.6 313.7 432.1C316.2 428.0 318.8 356.3 321.3 356.3C322.5 356.3 323.8 356.9 325.0 358.2C327.9 361.1 330.7 425.4 333.6 425.4C336.7 425.4 339.9 398.9 343.0 398.9C344.9 398.9 346.8 401.6 348.7 403.7C353.8 409.2 358.8 430.2 363.9 430.2C369.6 430.2 375.2 428.6 380.9 425.4C383.4 424.0 386.0 403.7 388.5 403.7C392.9 403.7 397.4 405.3 401.8 408.4C405.3 410.9 408.7 435.9 412.2 435.9C415.7 435.9 419.1 420.7 422.6 420.7C425.1 420.7 427.7 421.3 430.2 422.6C433.3 424.2 436.5 431.0 439.6 437.8C441.8 442.6 444.1 454.8 446.3 454.8C447.9 454.8 449.4 452.3 451.0 447.2C453.2 440.1 455.4 376.3 457.6 375.2C462.4 372.7 467.1 374.0 471.9 371.5C475.0 369.9 478.2 362.0 481.3 362.0C483.8 362.0 486.4 389.8 488.9 396.1C493.9 408.7 499.0 415.0 504.0 415.0C508.1 415.0 512.3 407.4 516.4 407.4C519.2 407.4 522.1 417.9 524.9 417.9C527.1 417.9 529.2 417.9 531.4 417.9C541.5 417.9 551.6 436.8 561.7 436.8C565.8 436.8 569.9 421.7 574.0 421.7C577.5 421.7 580.9 445.3 584.4 445.3C588.5 445.3 592.6 426.4 596.7 426.4C600.2 426.4 603.6 440.6 607.1 440.6C611.5 440.6 616.0 432.4 620.4 430.2C624.2 428.3 628.0 427.3 631.8 427.3C634.9 427.3 638.1 445.7 641.2 445.7C650.1 445.7 658.9 445.7 667.8 445.7C670.9 445.7 674.1 450.0 677.2 450.0C680.7 450.0 684.1 445.3 687.6 445.3C691.4 445.3 695.2 461.4 699.0 461.4C702.8 461.4 706.6 434.9 710.4 434.9C713.5 434.9 716.7 445.7 719.8 445.7C733.2 445.7 746.6 445.7 760.0 445.7C766.8 445.7 773.5 445.7 780.3 445.7C784.1 445.7 787.9 435.9 791.7 435.9C795.5 435.9 799.2 435.9 803.0 435.9C806.2 435.9 809.3 445.7 812.5 445.7C817.6 445.7 822.6 445.6 827.7 445.3C830.8 445.1 834.0 440.6 837.1 440.6C840.3 440.6 843.4 457.6 846.6 457.6C849.8 457.6 852.9 448.9 856.1 445.7C861.1 440.6 866.2 435.9 871.2 435.9C875.0 435.9 878.8 445.7 882.6 445.7C886.4 445.7 890.2 445.7 894.0 445.7C897.8 445.7 901.5 435.9 905.3 435.9C908.5 435.9 911.6 445.7 914.8 445.7C919.9 445.7 924.9 445.7 930.0 445.7C933.1 445.7 936.3 426.4 939.4 426.4C943.2 426.4 947.0 436.4 950.8 439.6C954.6 442.8 958.4 445.7 962.2 445.7C968.1 445.7 974.1 445.7 980.0 445.7C986.3 445.7 992.6 445.7 998.9 445.7C1002.7 445.7 1006.5 441.5 1010.3 441.5C1013.1 441.5 1016.0 445.7 1018.8 445.7C1022.9 445.7 1027.0 435.5 1031.1 435.5C1034.3 435.5 1037.4 445.7 1040.6 445.7C1043.8 445.7 1046.9 441.5 1050.1 441.5C1054.5 441.5 1058.9 445.7 1063.3 445.7C1068.1 445.7 1072.8 435.5 1077.6 435.5C1083.0 435.5 1088.3 438.5 1093.7 441.5C1099.4 444.7 1105.0 454.4 1110.7 454.4C1114.8 454.4 1118.9 434.9 1123.0 434.9C1126.5 434.9 1129.9 445.7 1133.4 445.7C1141.9 445.7 1150.5 445.7 1159.0 445.7C1162.5 445.7 1165.9 432.1 1169.4 432.1C1172.6 432.1 1175.7 440.6 1178.9 440.6C1182.1 440.6 1185.2 430.6 1188.4 426.4C1193.1 420.1 1197.9 411.2 1202.6 411.2C1205.7 411.2 1208.9 434.0 1212.0 434.0C1215.7 434.0 1219.4 421.7 1223.1 421.7C1228.2 421.7 1233.2 426.4 1238.3 426.4C1241.8 426.4 1245.2 416.0 1248.7 416.0C1252.2 416.0 1255.6 435.9 1259.1 435.9C1262.9 435.9 1266.7 405.6 1270.5 405.6C1273.7 405.6 1276.8 417.0 1280.0 422.6C1284.4 430.4 1288.8 445.7 1293.2 445.7C1296.7 445.7 1300.1 412.2 1303.6 412.2C1307.1 412.2 1310.5 414.8 1314.0 417.3" stroke="#8fb0c6" stroke-width="1.7" fill="none" stroke-dasharray="0.01 3.6" stroke-linecap="round"/><path d="M298.9 436.8C302.6 415.3 306.2 393.8 309.9 393.8C312.7 393.8 315.6 408.8 318.4 413.1C320.3 416.0 322.2 415.9 324.1 418.8C327.1 423.5 330.2 440.6 333.2 440.6C336.9 440.6 340.7 383.2 344.4 383.2C348.1 383.2 351.7 425.4 355.4 425.4C358.9 425.4 362.3 407.6 365.8 403.7C367.1 402.3 368.3 402.7 369.6 400.8C372.6 396.2 375.7 370.5 378.7 370.5C382.5 370.5 386.2 420.7 390.0 420.7C393.9 420.7 397.9 368.6 401.8 368.6C404.9 368.6 408.1 406.2 411.2 411.2C412.8 413.7 414.4 412.5 416.0 415.0C418.8 419.5 421.7 440.6 424.5 440.6C428.0 440.6 431.4 407.4 434.9 407.4C439.0 407.4 443.1 408.7 447.2 411.2C448.8 412.2 450.4 412.5 452.0 415.0C454.2 418.5 456.4 435.9 458.6 435.9C462.4 435.9 466.2 426.4 470.0 426.4C473.8 426.4 477.5 445.3 481.3 445.3C484.8 445.3 488.2 434.7 491.7 431.1C496.1 426.5 500.6 422.6 505.0 422.6C508.5 422.6 511.9 431.1 515.4 431.1C519.2 431.1 523.0 418.5 526.8 417.9C531.2 417.2 535.5 416.9 539.9 416.9C542.7 416.9 545.6 432.6 548.4 434.9C553.1 438.7 557.9 440.6 562.6 440.6C566.1 440.6 569.5 427.3 573.0 427.3C576.8 427.3 580.6 440.6 584.4 440.6C588.2 440.6 592.0 416.0 595.8 416.0C599.3 416.0 602.7 435.9 606.2 435.9C610.9 435.9 615.7 435.9 620.4 435.9C623.6 435.9 626.7 446.3 629.9 446.3C634.0 446.3 638.1 408.4 642.2 408.4C646.0 408.4 649.7 435.9 653.5 435.9C657.0 435.9 660.5 421.7 664.0 421.7C668.4 421.7 672.8 422.6 677.2 422.6C680.7 422.6 684.1 379.0 687.6 379.0C691.4 379.0 695.2 408.4 699.0 408.4C702.8 408.4 706.6 388.1 710.4 388.1C714.2 388.1 717.9 440.6 721.7 440.6C725.5 440.6 729.3 373.3 733.1 373.3C736.9 373.3 740.7 432.1 744.5 432.1C748.0 432.1 751.4 430.2 754.9 426.4C759.3 421.6 763.6 379.0 768.0 379.0C771.8 379.0 775.6 426.4 779.4 426.4C783.2 426.4 786.9 402.7 790.7 402.7C793.9 402.7 797.0 417.5 800.2 420.7C801.8 422.3 803.3 421.8 804.9 423.5C807.8 426.6 810.6 440.6 813.5 440.6C817.6 440.6 821.7 439.0 825.8 435.9C829.3 433.3 832.7 393.8 836.2 393.8C839.7 393.8 843.1 417.7 846.6 425.4C850.7 434.5 854.8 440.6 858.9 440.6C863.0 440.6 867.1 434.7 871.2 425.4C875.0 416.8 878.8 388.5 882.6 388.5C886.4 388.5 890.2 421.7 894.0 421.7C898.1 421.7 902.2 421.4 906.3 420.7C909.8 420.1 913.2 365.8 916.7 365.8C920.5 365.8 924.3 416.9 928.1 416.9C931.9 416.9 935.6 351.6 939.4 351.6C943.2 351.6 947.0 407.1 950.8 407.1C954.6 407.1 958.4 360.1 962.2 360.1C966.0 360.1 969.7 445.7 973.5 445.7C976.7 445.7 979.8 436.1 983.0 432.1C987.7 426.2 992.3 417.9 997.0 417.9C1000.8 417.9 1004.6 440.6 1008.4 440.6C1011.6 440.6 1014.7 420.8 1017.9 416.9C1019.2 415.3 1020.4 415.7 1021.7 414.1C1024.8 410.1 1028.0 389.5 1031.1 389.5C1034.3 389.5 1037.4 410.5 1040.6 415.0C1042.2 417.3 1043.8 416.5 1045.4 418.8C1048.2 422.9 1051.1 440.6 1053.9 440.6C1057.7 440.6 1061.4 403.7 1065.2 403.7C1069.0 403.7 1072.8 407.4 1076.6 407.4C1080.7 407.4 1084.8 407.4 1088.9 407.4C1092.4 407.4 1095.8 435.5 1099.3 435.5C1103.1 435.5 1106.9 403.7 1110.7 403.7C1114.2 403.7 1117.6 426.0 1121.1 426.0C1125.8 426.0 1130.6 425.6 1135.3 424.9C1137.8 424.5 1140.4 415.1 1142.9 413.1C1144.5 411.8 1146.0 412.5 1147.6 411.2C1149.5 409.7 1151.4 392.0 1153.3 389.5C1155.2 387.0 1157.1 388.2 1159.0 385.7C1162.2 381.5 1165.3 318.4 1168.5 318.4C1172.0 318.4 1175.4 417.3 1178.9 417.3C1183.3 417.3 1187.8 415.6 1192.2 412.2C1195.7 409.5 1199.1 382.8 1202.6 382.8C1206.1 382.8 1209.5 431.1 1213.0 431.1C1217.6 431.1 1222.3 431.1 1226.9 431.1C1230.1 431.1 1233.2 403.7 1236.4 403.7C1240.5 403.7 1244.6 416.5 1248.7 416.5C1251.5 416.5 1254.4 407.0 1257.2 404.6C1259.1 403.0 1261.0 403.4 1262.9 401.8C1265.7 399.4 1268.6 390.4 1271.4 390.4C1275.2 390.4 1279.0 445.7 1282.8 445.7C1286.0 445.7 1289.1 434.8 1292.3 432.1C1296.1 428.9 1299.8 427.8 1303.6 427.3C1308.0 426.7 1312.5 426.5 1316.9 426.4" stroke="#3d9fd3" stroke-width="2.2" fill="none" stroke-linejoin="round"/></svg>
<div class="axis" style="left:247px;top:244px;line-height:12px;font-size:10.8px">$1.5T</div>
<div class="axis" style="left:247px;top:292px;line-height:12px;font-size:10.8px">$1T</div>
<div class="axis" style="left:247px;top:340px;line-height:12px;font-size:10.8px">$500</div>
<div class="axis" style="left:247px;top:389px;line-height:12px;font-size:10.8px">$0</div>
<div class="axis" style="left:247px;top:437px;line-height:12px;font-size:10.8px">-$500</div>
<div class="axis" style="left:269.0px;top:457px;line-height:12px;width:60px;text-align:center">11 Feb</div>
<div class="axis" style="left:326.2px;top:457px;line-height:12px;width:60px;text-align:center">16 Feb</div>
<div class="axis" style="left:383.4px;top:457px;line-height:12px;width:60px;text-align:center">21 Feb</div>
<div class="axis" style="left:440.6px;top:457px;line-height:12px;width:60px;text-align:center">26 Feb</div>
<div class="axis" style="left:497.8px;top:457px;line-height:12px;width:60px;text-align:center">3 Mar</div>
<div class="axis" style="left:555.0px;top:457px;line-height:12px;width:60px;text-align:center">8 Mar</div>
<div class="axis" style="left:612.2px;top:457px;line-height:12px;width:60px;text-align:center">13 Mar</div>
<div class="axis" style="left:669.4px;top:457px;line-height:12px;width:60px;text-align:center">18 Mar</div>
<div class="axis" style="left:726.6px;top:457px;line-height:12px;width:60px;text-align:center">23 Mar</div>
<div class="axis" style="left:783.8px;top:457px;line-height:12px;width:60px;text-align:center">28 Mar</div>
<div class="axis" style="left:841.0px;top:457px;line-height:12px;width:60px;text-align:center">2 Apr</div>
<div class="axis" style="left:898.2px;top:457px;line-height:12px;width:60px;text-align:center">7 Apr</div>
<div class="axis" style="left:955.4px;top:457px;line-height:12px;width:60px;text-align:center">12 Apr</div>
<div class="axis" style="left:1012.6px;top:457px;line-height:12px;width:60px;text-align:center">17 Apr</div>
<div class="axis" style="left:1069.8px;top:457px;line-height:12px;width:60px;text-align:center">22 Apr</div>
<div class="axis" style="left:1127.0px;top:457px;line-height:12px;width:60px;text-align:center">27 Apr</div>
<div class="axis" style="left:1184.2px;top:457px;line-height:12px;width:60px;text-align:center">2 May</div>
<div class="axis" style="left:1241.4px;top:457px;line-height:12px;width:60px;text-align:center">7 May</div>
<svg class="abs" style="left:649px;top:495px" width="12" height="4"><line x1="0" y1="2" x2="12" y2="2" stroke="#3d9fd3" stroke-width="2"/></svg>
<div class="axis" style="left:665px;top:491px;line-height:12px">11 Feb&#8211;11 May 2025</div>
<svg class="abs" style="left:772px;top:495px" width="12" height="4"><line x1="0.5" y1="2" x2="12" y2="2" stroke="#88b4cf" stroke-width="1.4" stroke-dasharray="1.2 2.4"/></svg>
<div class="axis" style="left:788px;top:491px;line-height:12px">13 Nov 2024&#8211;10 Feb 2025</div>
<div class="card" style="left:1350px;top:171px;width:546px;height:350px"><div class="ttl sb" style="left:15px;top:16.5px">Total sales breakdown</div><div class="brow" style="top:40.0px"><div class="l">Gross sales</div><div class="v">$28,815.00</div><div class="p"><svg width="7" height="7" viewBox="0 0 8 8" style="margin-right:2px"><path d="M2 6 L6 2 M2.6 2 H6 V5.4" stroke="#1f8a5a" stroke-width="1.6" fill="none" stroke-linecap="square"/></svg>72%</div></div><div class="brow" style="top:77.5px"><div class="l">Discounts</div><div class="v">-$532.00</div><div class="p"><svg width="7" height="7" viewBox="0 0 8 8" style="margin-right:2px"><path d="M2 6 L6 2 M2.6 2 H6 V5.4" stroke="#1f8a5a" stroke-width="1.6" fill="none" stroke-linecap="square"/></svg>83%</div></div><div class="brow" style="top:115.0px"><div class="l">Returns</div><div class="v">-$188.00</div><div class="p"><svg width="7" height="7" viewBox="0 0 8 8" style="margin-right:2px"><path d="M2 2 L6 6 M2.6 6 H6 V2.6" stroke="#1f8a5a" stroke-width="1.6" fill="none" stroke-linecap="square"/></svg>84%</div></div><div class="brow" style="top:152.5px"><div class="l">Net sales</div><div class="v">$28,095.00</div><div class="p"><svg width="7" height="7" viewBox="0 0 8 8" style="margin-right:2px"><path d="M2 6 L6 2 M2.6 2 H6 V5.4" stroke="#1f8a5a" stroke-width="1.6" fill="none" stroke-linecap="square"/></svg>126%</div></div><div class="brow" style="top:190.0px"><div class="l">Shipping charges</div><div class="v">$585.20</div><div class="p"><svg width="7" height="7" viewBox="0 0 8 8" style="margin-right:2px"><path d="M2 6 L6 2 M2.6 2 H6 V5.4" stroke="#1f8a5a" stroke-width="1.6" fill="none" stroke-linecap="square"/></svg>57%</div></div><div class="brow" style="top:227.5px"><div class="l">Return fees</div><div class="v">$0.00</div><div class="abs" style="left:483px;top:15px;width:10px;height:1.3px;background:#8a8a8a"></div></div><div class="brow" style="top:265.0px"><div class="l">Taxes</div><div class="v">$48.79</div><div class="p" style="color:#8a8a8a"><svg width="7" height="7" viewBox="0 0 8 8" style="margin-right:2px"><path d="M2 6 L6 2 M2.6 2 H6 V5.4" stroke="#8a8a8a" stroke-width="1.6" fill="none" stroke-linecap="square"/></svg>44%</div></div><div class="brow" style="top:302.5px"><div class="l">Total sales</div><div class="v">$28,728.99</div><div class="p"><svg width="7" height="7" viewBox="0 0 8 8" style="margin-right:2px"><path d="M2 6 L6 2 M2.6 2 H6 V5.4" stroke="#1f8a5a" stroke-width="1.6" fill="none" stroke-linecap="square"/></svg>124%</div></div></div>
<div class="card" style="left:230px;top:536px;width:546px;height:228px"><div class="ttl sb" style="left:15px;top:16.5px">Total sales by sales channel</div></div>
<svg class="abs" style="left:230px;top:536px;overflow:visible" width="546" height="228" viewBox="230 586 546 228"><path d="M374.34 641.41 A71.20 71.20 0 1 1 360.12 642.59" stroke="#3aa5e8" stroke-width="15.5" fill="none"/><path d="M362.08 642.26 A71.20 71.20 0 0 1 371.86 641.41" stroke="#7b2fe0" stroke-width="15.5" fill="none"/></svg>
<div class="abs" style="left:313px;top:645px;width:120px;text-align:center;font-size:19.5px;line-height:22px;color:#303030;-webkit-text-stroke:0.35px #303030">$28.7T</div>
<div class="abs up" style="left:313px;top:667px;width:120px;text-align:center;line-height:12px;font-size:10px;font-weight:400;-webkit-text-stroke:0.3px #1f8a5a"><svg width="7" height="7" viewBox="0 0 8 8" style="margin-right:2px"><path d="M2 6 L6 2 M2.6 2 H6 V5.4" stroke="#1f8a5a" stroke-width="1.6" fill="none" stroke-linecap="square"/></svg>124%</div>
<div class="abs" style="left:480px;top:620px;width:11px;height:11px;border-radius:2px;background:#3aa5e8"></div>
<div class="abs" style="left:494px;top:618px;font-size:11.3px;line-height:14px;color:#616161;white-space:nowrap">Online Store</div>
<div class="abs" style="left:580px;width:100.5px;text-align:right;top:618px;font-size:11.3px;line-height:14px;color:#616161">$28T</div>
<div class="abs up" style="left:684px;top:619px;font-size:8.6px;line-height:12px;white-space:nowrap"><svg width="6" height="6" viewBox="0 0 8 8" style="margin-right:2px"><path d="M2 6 L6 2 M2.6 2 H6 V5.4" stroke="#1f8a5a" stroke-width="1.6" fill="none" stroke-linecap="square"/></svg>130%</div>
<div class="abs" style="left:480px;top:645px;width:11px;height:11px;border-radius:2px;background:#7b2fe0"></div>
<div class="abs" style="left:494px;top:643px;font-size:11.3px;line-height:14px;color:#616161;white-space:nowrap">Shop</div>
<div class="abs" style="left:580px;width:100.5px;text-align:right;top:643px;font-size:11.3px;line-height:14px;color:#616161">$778.59</div>
<div class="abs up" style="left:684px;top:644px;font-size:10.2px;line-height:12px;white-space:nowrap"><svg width="6" height="6" viewBox="0 0 8 8" style="margin-right:2px"><path d="M2 6 L6 2 M2.6 2 H6 V5.4" stroke="#1f8a5a" stroke-width="1.6" fill="none" stroke-linecap="square"/></svg>90%</div>
<div class="abs" style="left:480px;top:670px;width:11px;height:11px;border-radius:2px;background:#6c6fe0"></div>
<div class="abs" style="left:494px;top:668px;font-size:11.3px;line-height:14px;color:#616161;white-space:nowrap">Draft Orders</div>
<div class="abs" style="left:580px;width:100.5px;text-align:right;top:668px;font-size:11.3px;line-height:14px;color:#616161">$0</div>
<div class="abs" style="left:686px;top:675px;width:10px;height:1.2px;background:#616161"></div>
<div class="abs" style="left:480px;top:694px;width:11px;height:11px;border-radius:2px;background:#d63fa8"></div>
<div class="abs" style="left:494px;top:692px;font-size:11.3px;line-height:14px;color:#616161;white-space:nowrap">Facebook &amp; Instagram</div>
<div class="abs" style="left:580px;width:100.5px;text-align:right;top:692px;font-size:11.3px;line-height:14px;color:#616161">$0</div>
<div class="abs up" style="left:684px;top:693px;font-size:8.6px;line-height:12px;color:#303030;font-weight:400;-webkit-text-stroke:0.3px #303030;white-space:nowrap"><svg width="6" height="6" viewBox="0 0 8 8" style="margin-right:2px"><path d="M2 2 L6 6 M2.6 6 H6 V2.6" stroke="#303030" stroke-width="1.6" fill="none" stroke-linecap="square"/></svg>100%</div>
<div class="card" style="left:790px;top:536px;width:546px;height:228px"><div class="ttl sb" style="left:15px;top:16.5px">Average order value over time</div><div class="abs" style="left:15px;top:40px;font-size:19.5px;line-height:22px;white-space:nowrap;color:#303030;-webkit-text-stroke:0.3px #303030">$96.86</div><div class="abs up" style="left:82px;top:45px;line-height:12px;font-size:10.5px"><svg width="7" height="7" viewBox="0 0 8 8" style="margin-right:2px"><path d="M2 6 L6 2 M2.6 2 H6 V5.4" stroke="#1f8a5a" stroke-width="1.6" fill="none" stroke-linecap="square"/></svg>22%</div></div>
<svg class="abs" style="left:790px;top:536px;overflow:visible" width="546" height="228" viewBox="790 586 546 228"><line x1="852" y1="666.0" x2="1318" y2="666.0" stroke="#ebebeb" stroke-width="1"/><line x1="852" y1="737.0" x2="1318" y2="737.0" stroke="#ebebeb" stroke-width="1"/><path d="M851.9 703.8C853.1 706.9 854.4 710.0 855.6 710.0C857.1 710.0 858.5 705.0 860.0 705.0C861.7 705.0 863.3 709.1 865.0 710.0C867.9 711.7 870.9 711.9 873.8 712.5C876.7 713.1 879.6 713.8 882.5 713.8C884.2 713.8 885.8 703.6 887.5 703.1C890.0 702.3 892.5 702.7 895.0 701.9C896.3 701.5 897.5 691.9 898.8 691.9C900.0 691.9 901.3 694.3 902.5 696.3C904.2 699.0 905.8 707.5 907.5 707.5C909.2 707.5 910.8 703.1 912.5 703.1C917.1 703.1 921.7 703.3 926.3 703.8C930.0 704.2 933.8 705.7 937.5 708.8C939.2 710.2 940.8 713.8 942.5 713.8C944.6 713.8 946.7 703.1 948.8 703.1C950.9 703.1 952.9 705.6 955.0 705.6C956.7 705.6 958.3 704.3 960.0 703.8C962.5 703.1 965.0 702.5 967.5 702.5C970.4 702.5 973.4 706.9 976.3 706.9C980.5 706.9 984.6 703.8 988.8 703.8C989.6 703.8 990.5 718.8 991.3 718.8C993.8 718.8 996.3 702.5 998.8 702.5C999.8 702.5 1000.9 708.1 1001.9 713.8" stroke="#8fb0c6" stroke-width="1.6" fill="none" stroke-dasharray="0.01 3.4" stroke-linecap="round"/><path d="M1025.0 720.0C1026.7 728.5 1028.3 736.9 1030.0 736.9C1031.0 736.9 1032.1 706.3 1033.1 705.0C1035.0 702.5 1036.9 701.9 1038.8 701.3" stroke="#8fb0c6" stroke-width="1.6" fill="none" stroke-dasharray="0.01 3.4" stroke-linecap="round"/><path d="M1131.3 701.3 L1132.5 735.0" stroke="#8fb0c6" stroke-width="1.6" fill="none" stroke-dasharray="0.01 3.4" stroke-linecap="round"/><path d="M1144.4 666.3 L1150.0 713.8" stroke="#8fb0c6" stroke-width="1.6" fill="none" stroke-dasharray="0.01 3.4" stroke-linecap="round"/><path d="M1113.1 730.0 L1116.9 736.3" stroke="#8fb0c6" stroke-width="1.6" fill="none" stroke-dasharray="0.01 3.4" stroke-linecap="round"/><path d="M1207.5 702.0 L1211.3 719.4" stroke="#8fb0c6" stroke-width="1.6" fill="none" stroke-dasharray="0.01 3.4" stroke-linecap="round"/><path d="M1248.8 686.0C1250.5 702.7 1252.1 719.4 1253.8 719.4C1256.3 719.4 1258.8 714.7 1261.3 710.0" stroke="#8fb0c6" stroke-width="1.6" fill="none" stroke-dasharray="0.01 3.4" stroke-linecap="round"/><path d="M1265.0 712.0C1266.7 715.5 1268.3 719.0 1270.0 719.0C1272.0 719.0 1274.0 713.2 1276.0 711.0C1281.0 705.4 1286.0 702.0 1291.0 702.0C1292.7 702.0 1294.3 705.0 1296.0 706.0C1298.3 707.3 1300.7 707.7 1303.0 708.0" stroke="#8fb0c6" stroke-width="1.6" fill="none" stroke-dasharray="0.01 3.4" stroke-linecap="round"/><path d="M1311.3 713.0 L1315.6 686.9" stroke="#8fb0c6" stroke-width="1.6" fill="none" stroke-dasharray="0.01 3.4" stroke-linecap="round"/><path d="M851.9 703.1C853.6 704.4 855.2 705.6 856.9 705.6C857.5 705.6 858.2 704.2 858.8 702.5C860.0 699.1 861.3 684.4 862.5 684.4C864.2 684.4 865.8 720.0 867.5 720.0C869.2 720.0 870.8 709.4 872.5 709.4C874.4 709.4 876.2 713.8 878.1 713.8C879.6 713.8 881.0 698.1 882.5 698.1C885.0 698.1 887.5 698.1 890.0 698.1C891.3 698.1 892.5 708.1 893.8 708.1C895.5 708.1 897.1 707.3 898.8 705.6C900.5 703.9 902.1 696.3 903.8 696.3C905.7 696.3 907.5 720.0 909.4 720.0C911.3 720.0 913.1 717.5 915.0 713.1C916.7 709.2 918.3 696.3 920.0 696.3C921.7 696.3 923.3 701.9 925.0 701.9C926.7 701.9 928.3 666.3 930.0 666.3C931.9 666.3 933.7 736.9 935.6 736.9C937.1 736.9 938.5 713.3 940.0 711.9C942.1 709.8 944.2 708.8 946.3 708.8C949.8 708.8 953.4 711.9 956.9 711.9C958.4 711.9 959.8 701.9 961.3 701.9C963.2 701.9 965.0 719.4 966.9 719.4C968.4 719.4 969.8 701.9 971.3 701.9C973.4 701.9 975.4 702.1 977.5 702.5C979.2 702.8 980.8 720.0 982.5 720.0C984.2 720.0 985.8 701.9 987.5 701.9C989.8 701.9 992.1 701.9 994.4 701.9C995.9 701.9 997.3 714.7 998.8 720.6C1000.2 726.4 1001.7 736.9 1003.1 736.9C1004.8 736.9 1006.4 702.8 1008.1 702.5C1010.4 702.1 1012.7 701.9 1015.0 701.9C1016.3 701.9 1017.5 707.5 1018.8 707.5C1020.7 707.5 1022.5 694.4 1024.4 694.4C1026.1 694.4 1027.7 703.8 1029.4 703.8C1031.3 703.8 1033.1 667.5 1035.0 667.5C1036.3 667.5 1037.5 678.7 1038.8 681.9C1039.6 684.0 1040.5 683.4 1041.3 686.3C1042.5 690.6 1043.8 720.0 1045.0 720.0C1047.1 720.0 1049.2 712.8 1051.3 705.6C1052.7 700.7 1054.2 687.5 1055.6 687.5C1057.1 687.5 1058.5 699.9 1060.0 701.9C1062.1 704.8 1064.2 703.9 1066.3 706.3C1068.0 708.2 1069.6 713.8 1071.3 713.8C1073.0 713.8 1074.6 705.6 1076.3 705.6C1077.5 705.6 1078.8 706.3 1080.0 707.5C1082.3 709.7 1084.6 720.0 1086.9 720.0C1088.6 720.0 1090.2 704.3 1091.9 702.5C1093.8 700.4 1095.6 699.4 1097.5 699.4C1099.6 699.4 1101.7 700.4 1103.8 702.5C1105.2 703.9 1106.7 728.1 1108.1 728.1C1109.8 728.1 1111.4 703.6 1113.1 693.8C1115.0 682.6 1116.9 666.5 1118.8 666.5C1120.2 666.5 1121.7 708.1 1123.1 708.1C1125.4 708.1 1127.7 708.1 1130.0 708.1C1131.5 708.1 1132.9 688.8 1134.4 688.8C1136.1 688.8 1137.7 703.1 1139.4 703.1C1141.1 703.1 1142.7 696.9 1144.4 696.9C1146.3 696.9 1148.1 713.8 1150.0 713.8C1151.7 713.8 1153.3 685.6 1155.0 685.6C1156.7 685.6 1158.3 736.9 1160.0 736.9C1161.7 736.9 1163.3 718.1 1165.0 712.5C1166.9 706.2 1168.7 703.1 1170.6 703.1C1172.3 703.1 1173.9 720.0 1175.6 720.0C1177.3 720.0 1178.9 706.5 1180.6 702.5C1182.5 697.9 1184.4 695.6 1186.3 695.6C1188.4 695.6 1190.4 698.1 1192.5 703.1C1193.8 706.2 1195.0 720.0 1196.3 720.0C1198.2 720.0 1200.0 699.4 1201.9 699.4C1203.8 699.4 1205.6 709.4 1207.5 709.4C1209.0 709.4 1210.4 703.1 1211.9 703.1C1213.8 703.1 1215.6 720.0 1217.5 720.0C1219.4 720.0 1221.2 698.8 1223.1 698.8C1225.0 698.8 1226.9 700.5 1228.8 703.8C1230.2 706.3 1231.7 720.0 1233.1 720.0C1235.0 720.0 1236.9 698.1 1238.8 698.1C1240.5 698.1 1242.1 701.9 1243.8 701.9C1245.5 701.9 1247.1 678.8 1248.8 678.8C1250.2 678.8 1251.7 699.8 1253.1 701.9C1255.4 705.2 1257.7 706.9 1260.0 706.9C1261.5 706.9 1262.9 692.5 1264.4 692.5C1266.1 692.5 1267.7 709.8 1269.4 710.6C1271.3 711.5 1273.1 711.9 1275.0 711.9C1276.7 711.9 1278.3 707.2 1280.0 705.6C1281.7 704.0 1283.3 702.5 1285.0 702.5C1287.1 702.5 1289.2 705.0 1291.3 705.0C1293.0 705.0 1294.6 670.0 1296.3 670.0C1298.0 670.0 1299.6 736.9 1301.3 736.9C1303.0 736.9 1304.6 718.1 1306.3 712.5C1308.2 706.2 1310.0 703.1 1311.9 703.1C1313.4 703.1 1314.8 708.8 1316.3 714.4" stroke="#3d9fd3" stroke-width="2" fill="none" stroke-linejoin="round"/></svg>
<div class="axis" style="left:807px;top:609px;line-height:12px;font-size:10.8px">$200</div>
<div class="axis" style="left:807px;top:680px;line-height:12px;font-size:10.8px">$0</div>
<div class="axis" style="left:822.0px;top:700px;line-height:12px;width:60px;text-align:center">11 Feb</div>
<div class="axis" style="left:874.3px;top:700px;line-height:12px;width:60px;text-align:center">21 Feb</div>
<div class="axis" style="left:926.6px;top:700px;line-height:12px;width:60px;text-align:center">3 Mar</div>
<div class="axis" style="left:978.9px;top:700px;line-height:12px;width:60px;text-align:center">13 Mar</div>
<div class="axis" style="left:1031.2px;top:700px;line-height:12px;width:60px;text-align:center">23 Mar</div>
<div class="axis" style="left:1083.5px;top:700px;line-height:12px;width:60px;text-align:center">2 Apr</div>
<div class="axis" style="left:1135.8px;top:700px;line-height:12px;width:60px;text-align:center">12 Apr</div>
<div class="axis" style="left:1188.1px;top:700px;line-height:12px;width:60px;text-align:center">22 Apr</div>
<div class="axis" style="left:1240.4px;top:700px;line-height:12px;width:60px;text-align:center">2 May</div>
<svg class="abs" style="left:929px;top:739px" width="12" height="4"><line x1="0" y1="2" x2="12" y2="2" stroke="#3d9fd3" stroke-width="2"/></svg>
<div class="axis" style="left:945px;top:735px;line-height:12px">11 Feb&#8211;11 May 2025</div>
<svg class="abs" style="left:1052px;top:739px" width="12" height="4"><line x1="0.5" y1="2" x2="12" y2="2" stroke="#88b4cf" stroke-width="1.4" stroke-dasharray="1.2 2.4"/></svg>
<div class="axis" style="left:1068px;top:735px;line-height:12px">13 Nov 2024&#8211;10 Feb 2025</div>
<div class="card" style="left:1350px;top:536px;width:546px;height:228px"><div class="ttl sb" style="left:15px;top:16.5px">Total sales by product</div></div>
<div class="abs" style="left:1364px;top:579px;font-size:10.5px;line-height:12px;color:#616161;white-space:nowrap">CAMELNO Thong [3-pack] &#183; Vivie Intimates &#183; None</div>
<div class="abs" style="left:1364px;top:593px;width:399px;height:30px;background:#3aa5e8;border-radius:0 3px 3px 0"></div>
<div class="abs" style="left:1772px;top:603px;font-size:10px;line-height:12px;color:#616161">$15,767.07</div>
<div class="abs up" style="left:1832px;top:603px;font-size:10px;line-height:12px"><svg width="7" height="7" viewBox="0 0 8 8" style="margin-right:2px"><path d="M2 6 L6 2 M2.6 2 H6 V5.4" stroke="#1f8a5a" stroke-width="1.6" fill="none" stroke-linecap="square"/></svg>195%</div>
<div class="abs" style="left:1364px;top:625px;width:136px;height:30px;background:#92c8ea;border-radius:0 3px 3px 0"></div>
<div class="abs" style="left:1509px;top:634px;font-size:10px;line-height:12px;color:#616161">$5,353.71</div>
<div class="abs" style="left:1364px;top:674px;font-size:10.5px;line-height:12px;color:#616161;white-space:nowrap">CAMELNO Thong &#183; Vivie Intimates &#183; None</div>
<div class="abs" style="left:1364px;top:688px;width:282px;height:30px;background:#3aa5e8;border-radius:0 3px 3px 0"></div>
<div class="abs" style="left:1656px;top:697px;font-size:10px;line-height:12px;color:#616161">$11,161.72</div>
<div class="abs up" style="left:1712px;top:697px;font-size:10px;line-height:12px"><svg width="7" height="7" viewBox="0 0 8 8" style="margin-right:2px"><path d="M2 6 L6 2 M2.6 2 H6 V5.4" stroke="#1f8a5a" stroke-width="1.6" fill="none" stroke-linecap="square"/></svg>265%</div>
<div class="abs" style="left:1364px;top:720px;width:78px;height:30px;background:#92c8ea;border-radius:0 3px 3px 0"></div>
<div class="abs" style="left:1451px;top:729px;font-size:10px;line-height:12px;color:#616161">$3,056.15</div>
<div class="card" style="left:230px;top:779px;width:546px;height:200px"><div class="ttl sb" style="left:15px;top:16.5px">Sessions over time</div><div class="abs" style="left:15px;top:40px;font-size:18.5px;letter-spacing:-0.5px;line-height:22px;color:#303030;-webkit-text-stroke:0.3px #303030">9,195</div><div class="abs" style="left:65px;top:45px;line-height:12px;font-size:10px;color:#303030;-webkit-text-stroke:0.2px #303030"><svg width="7" height="7" viewBox="0 0 8 8" style="margin-right:2px"><path d="M2 2 L6 6 M2.6 6 H6 V2.6" stroke="#303030" stroke-width="1.6" fill="none" stroke-linecap="square"/></svg>17%</div><div class="axis" style="left:17px;top:74px;line-height:12px;font-size:10px">1.5T</div><div class="abs" style="left:58px;top:79px;width:470px;height:1px;background:#ebebeb"></div></div>
<div class="card" style="left:790px;top:779px;width:546px;height:200px"><div class="ttl sb" style="left:15px;top:16.5px">Conversion rate over time</div><div class="abs" style="left:15px;top:40px;font-size:19px;line-height:22px;color:#303030;-webkit-text-stroke:0.3px #303030">3%</div><div class="abs up" style="left:48px;top:45px;line-height:12px;font-size:10.5px"><svg width="7" height="7" viewBox="0 0 8 8" style="margin-right:2px"><path d="M2 6 L6 2 M2.6 2 H6 V5.4" stroke="#1f8a5a" stroke-width="1.6" fill="none" stroke-linecap="square"/></svg>132%</div><div class="axis" style="left:17px;top:74px;line-height:12px">20%</div><div class="abs" style="left:58px;top:79px;width:470px;height:1px;background:#ebebeb"></div><div class="axis" style="left:17px;top:112px;line-height:12px">15%</div></div>
<div class="card" style="left:1350px;top:779px;width:546px;height:200px"><div class="ttl sb" style="left:15px;top:16.5px">Conversion rate breakdown</div><div class="abs" style="left:15px;top:40px;font-size:19px;line-height:22px;color:#303030;-webkit-text-stroke:0.3px #303030">3%</div><div class="abs up" style="left:48px;top:45px;line-height:12px;font-size:10.5px"><svg width="7" height="7" viewBox="0 0 8 8" style="margin-right:2px"><path d="M2 6 L6 2 M2.6 2 H6 V5.4" stroke="#1f8a5a" stroke-width="1.6" fill="none" stroke-linecap="square"/></svg>132%</div><div class="abs" style="left:15px;top:80px;width:12px;height:14px;border-radius:6px;background:#f1f1f1"></div><svg class="abs" style="left:16px;top:81px" width="10" height="12" viewBox="0 0 10 12"><path d="M3 1 L7 3.5 L3 6 L7 8.5 L3 11" stroke="#303030" stroke-width="1.2" fill="none"/><line x1="1.5" y1="6" x2="8.5" y2="6" stroke="#303030" stroke-width="1.2"/></svg><div class="abs" style="left:33px;top:82px;font-size:11.5px;line-height:13px;color:#303030;white-space:nowrap">Sessions</div><div class="abs" style="left:15px;top:99px;font-size:13.2px;line-height:15px;color:#303030;white-space:nowrap"><b>100%</b>&nbsp;<span style="color:#616161;font-size:11.8px">9,195</span></div><div class="abs" style="left:150px;top:76px;width:1px;height:40px;background:#e3e3e3"></div><div class="abs" style="left:161px;top:82px;font-size:11.5px;line-height:13px;color:#303030;white-space:nowrap">Added to cart</div><div class="abs" style="left:161px;top:99px;font-size:13.2px;line-height:15px;color:#303030;white-space:nowrap"><b>5.47%</b>&nbsp;<span style="color:#616161;font-size:11.8px">503</span></div><div class="abs" style="left:287px;top:76px;width:1px;height:40px;background:#e3e3e3"></div><div class="abs" style="left:298px;top:82px;font-size:11.5px;line-height:13px;color:#303030;white-space:nowrap">Reached checkout</div><div class="abs" style="left:298px;top:99px;font-size:13.2px;line-height:15px;color:#303030;white-space:nowrap"><b>3.92%</b>&nbsp;<span style="color:#616161;font-size:11.8px">360</span></div><div class="abs" style="left:424px;top:76px;width:1px;height:40px;background:#e3e3e3"></div><div class="abs" style="left:435px;top:82px;font-size:11.5px;line-height:13px;color:#303030;white-space:nowrap">Completed che...</div><div class="abs" style="left:435px;top:99px;font-size:13.2px;line-height:15px;color:#303030;white-space:nowrap"><b>3%</b>&nbsp;<span style="color:#616161;font-size:11.8px">276</span></div></div>
</div>
<div id="taskbar"></div>
</body></html>
